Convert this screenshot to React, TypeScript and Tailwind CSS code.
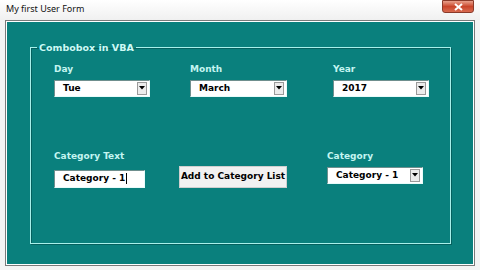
import React from "react";

function Combo({ value, width }: { value: string; width: string }) {
  return (
    <div
      className={`${width} h-[17px] bg-white flex items-center border-t border-l border-t-[#6f8f8e] border-l-[#6f8f8e] border-b border-r border-b-[#e8fbfa] border-r-[#e8fbfa] pl-[8px] pr-[2px]`}
    >
      <span className="flex-1 text-[9px] font-bold text-black leading-none">{value}</span>
      <div className="w-[10px] h-[13px] bg-[#ececec] border border-[#9a9a9a] flex items-center justify-center">
        <svg width="6" height="4" viewBox="0 0 6 4">
          <path d="M0 0 L6 0 L3 3.5 Z" fill="#000" />
        </svg>
      </div>
    </div>
  );
}

function Label({ children }: { children: React.ReactNode }) {
  return <div className="text-[9px] font-bold text-[#c4f5f1] leading-none mb-[6px]">{children}</div>;
}

export default function App() {
  return (
    <div
      className="w-[480px] h-[270px] bg-[#f4f4f4] flex flex-col overflow-hidden"
      style={{ fontFamily: '"DejaVu Sans", Tahoma, sans-serif' }}
    >
      <div className="h-[20px] flex items-start justify-between bg-gradient-to-b from-white to-[#f0f0f0] pl-[6px] pr-[6px]">
        <span
          className="text-[9px] text-[#111] mt-[4px] leading-none"
          style={{ fontFamily: '"Noto Sans", "Open Sans", sans-serif' }}
        >
          My first User Form
        </span>
        <div className="w-[32px] h-[13px] rounded-b-[3px] bg-gradient-to-b from-[#e8a08c] via-[#c9452b] to-[#d86a50] border border-[#8a3a2a] flex items-center justify-center">
          <svg width="9" height="8" viewBox="0 0 9 8">
            <path d="M1 1 L8 7 M8 1 L1 7" stroke="#fff" strokeWidth="2" />
          </svg>
        </div>
      </div>
      <div className="mx-[5px] h-[246px] border border-[#7a7a7a] bg-white p-[1px]">
        <div className="h-full bg-[#0a807d] pt-[21px] pl-[23px] pr-[22px] pb-[20px]">
          <fieldset className="h-full border border-[#a8f0ea] shadow-[inset_1px_1px_0_#05605e,1px_1px_0_#05605e]">
            <legend className="ml-[6px] px-[2px] text-[9.5px] font-bold text-[#cdfaf5] leading-none">
              Combobox in VBA
            </legend>
            <div className="pl-[23px]">
              <div className="flex mt-[12px]">
                <div className="w-[136px]">
                  <Label>Day</Label>
                  <Combo value="Tue" width="w-[96px]" />
                </div>
                <div className="w-[143px]">
                  <Label>Month</Label>
                  <Combo value="March" width="w-[97px]" />
                </div>
                <div>
                  <Label>Year</Label>
                  <Combo value="2017" width="w-[96px]" />
                </div>
              </div>
              <div className="flex items-start mt-[55px]">
                <div className="w-[125px]">
                  <Label>Category Text</Label>
                  <div className="w-[91px] h-[18px] mt-[9px] bg-white flex items-center pl-[8px] border-t border-l border-[#6f8f8e] border-b-[#e8fbfa] border-r-[#e8fbfa] border-b border-r">
                    <span className="text-[9px] font-bold text-black leading-none">Category - 1</span>
                    <span className="w-[1px] h-[11px] bg-black ml-[1px]" />
                  </div>
                </div>
                <div className="w-[148px] pt-[14px]">
                  <div className="w-[108px] h-[22px] bg-[#f1f1f1] border border-[#cfcfcf] flex items-center justify-center">
                    <span className="text-[9px] font-bold text-black leading-none">Add to Category List</span>
                  </div>
                </div>
                <div>
                  <Label>Category</Label>
                  <Combo value="Category - 1" width="w-[96px]" />
                </div>
              </div>
            </div>
          </fieldset>
        </div>
      </div>
    </div>
  );
}
